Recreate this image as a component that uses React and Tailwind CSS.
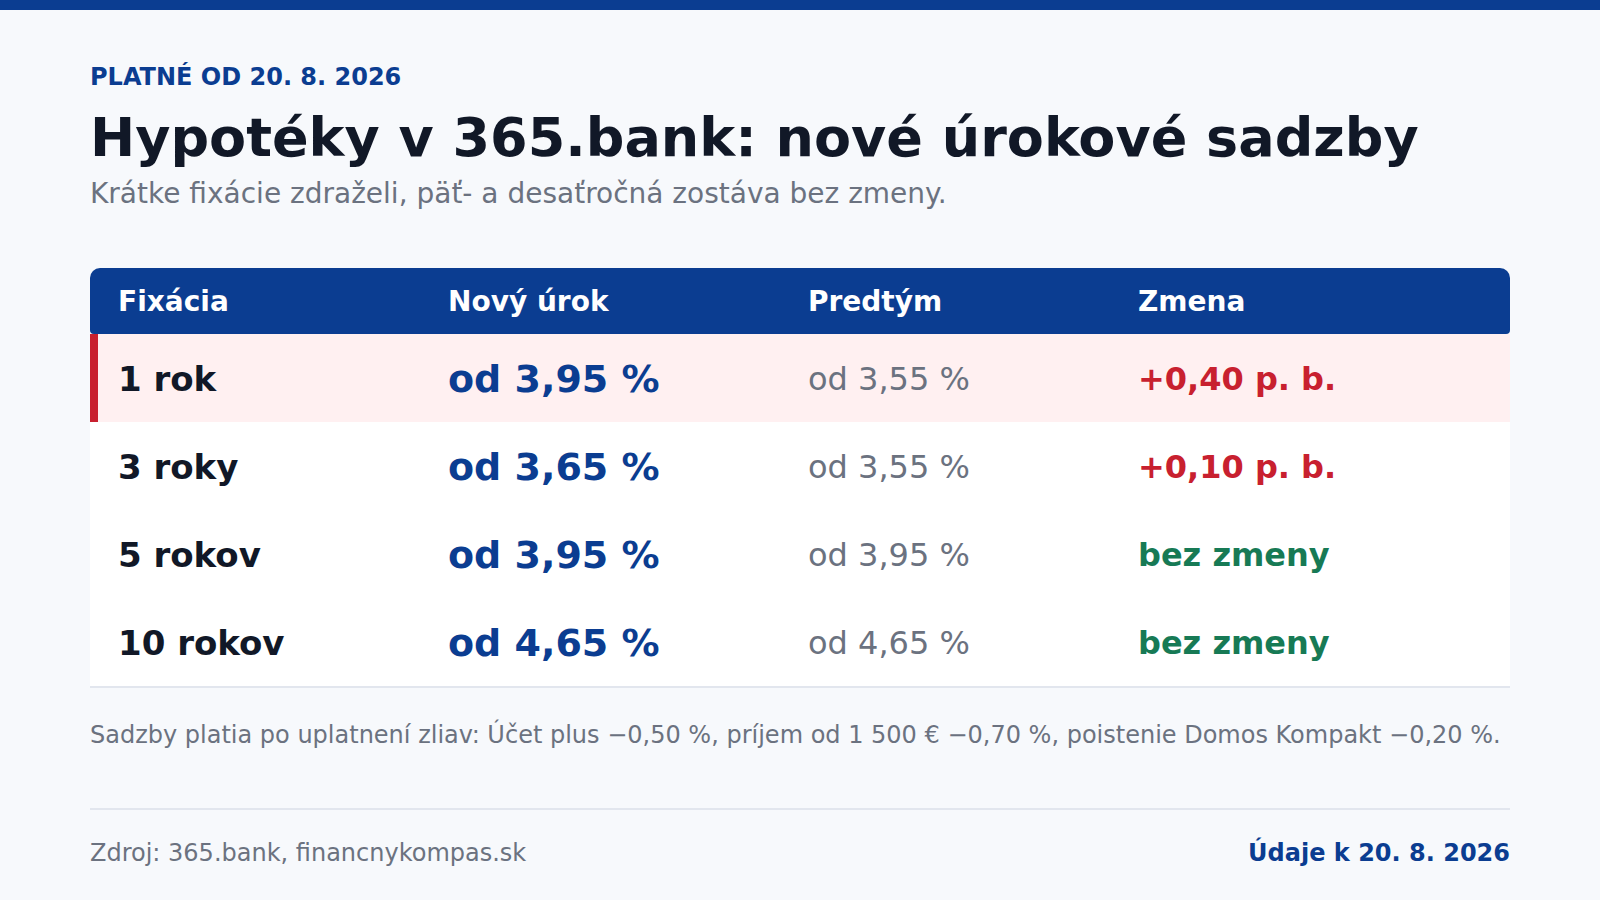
import React from 'react';

const rows = [
  { term: '1 rok', rate: 'od 3,95 %', before: 'od 3,55 %', change: '+0,40 p. b.', up: true, highlight: true },
  { term: '3 roky', rate: 'od 3,65 %', before: 'od 3,55 %', change: '+0,10 p. b.', up: true },
  { term: '5 rokov', rate: 'od 3,95 %', before: 'od 3,95 %', change: 'bez zmeny' },
  { term: '10 rokov', rate: 'od 4,65 %', before: 'od 4,65 %', change: 'bez zmeny' },
];

const cols = 'grid grid-cols-[330px_360px_330px_1fr]';

function RateRow({ row }) {
  return (
    <div
      className={
        cols +
        ' h-[88px] items-center pt-[2px] ' +
        (row.highlight ? 'bg-[#fff0f1] shadow-[inset_8px_0_0_#c8202f]' : 'bg-white')
      }
    >
      <div className="pl-[28px] text-[34px] font-bold text-[#111827]">{row.term}</div>
      <div className="pl-[28px] text-[38px] font-bold text-[#0b3d91]">{row.rate}</div>
      <div className="pl-[28px] text-[32px] text-[#6b7280]">{row.before}</div>
      <div className={'pl-[28px] text-[32px] font-bold ' + (row.up ? 'text-[#c8202f]' : 'text-[#177a55]')}>
        {row.change}
      </div>
    </div>
  );
}

export default function App() {
  return (
    <div className="w-[1600px] h-[900px] bg-[#f7f9fc] font-['DejaVu_Sans',sans-serif] overflow-hidden">
      <div className="h-[10px] bg-[#0b3d91]" />

      <div className="px-[90px] pt-[53px]">
        <div className="text-[24px] leading-[28px] font-bold text-[#0b3d91]">
          PLATNÉ OD 20. 8. 2026
        </div>
        <h1 className="mt-[15px] text-[54px] leading-[64px] font-bold text-[#111827]">
          Hypotéky v 365.bank: nové úrokové sadzby
        </h1>
        <p className="mt-[6px] text-[28px] leading-[36px] text-[#6b7280]">
          Krátke fixácie zdraželi, päť- a desaťročná zostáva bez zmeny.
        </p>

        <div className="mt-[56px] border-b-2 border-[#e2e6ee]">
          <div className={cols + ' h-[66px] items-center pt-[1px] bg-[#0b3d91] rounded-t-[10px] rounded-b-[4px] text-white text-[28px] font-bold'}>
            <div className="pl-[28px]">Fixácia</div>
            <div className="pl-[28px]">Nový úrok</div>
            <div className="pl-[28px]">Predtým</div>
            <div className="pl-[28px]">Zmena</div>
          </div>
          {rows.map((row) => (
            <RateRow key={row.term} row={row} />
          ))}
        </div>

        <p className="mt-[31px] text-[24px] leading-[32px] text-[#6b7280]">
          Sadzby platia po uplatnení zliav: Účet plus −0,50 %, príjem od 1 500 € −0,70 %, poistenie Domos Kompakt −0,20 %.
        </p>

        <div className="mt-[57px] border-t-2 border-[#e2e6ee] pt-[27px] flex justify-between text-[24px] leading-[32px]">
          <span className="text-[#6b7280]">Zdroj: 365.bank, financnykompas.sk</span>
          <span className="font-bold text-[#0b3d91]">Údaje k 20. 8. 2026</span>
        </div>
      </div>
    </div>
  );
}
